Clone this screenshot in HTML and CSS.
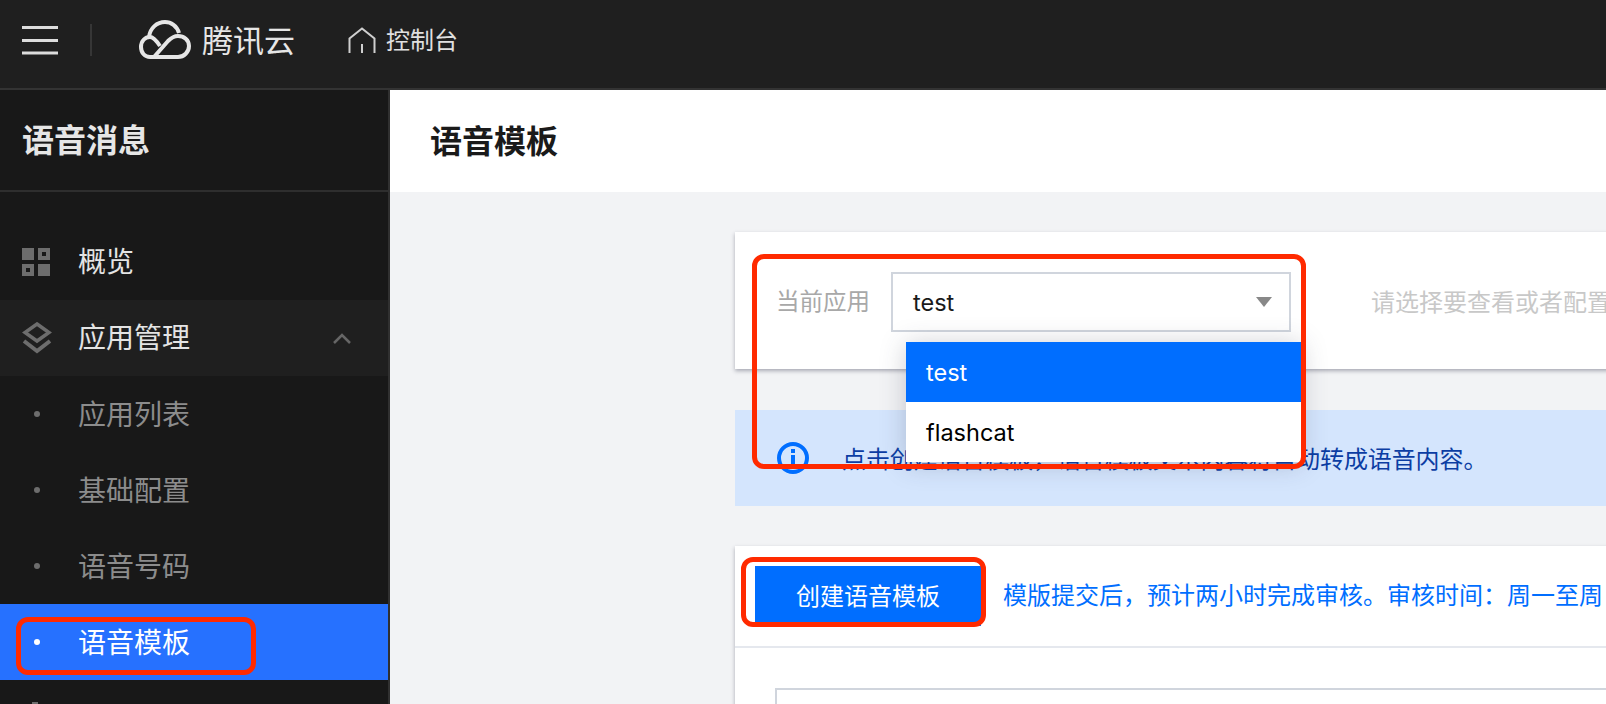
FILE: index.html
```html
<!DOCTYPE html>
<html lang="zh-CN">
<head>
  <meta charset="UTF-8">
  <meta name="viewport" content="width=device-width, initial-scale=1.0">
  <title>语音模板</title>
  <link rel="stylesheet" href="styles.css">
</head>
<body>
  <header class="topbar">
    <svg class="hamburger" width="36" height="30" viewBox="0 0 36 30">
      <path d="M0 2.500H36M0 15.500H36M0 28H36" stroke="#dcdcdc" stroke-width="3" fill="none"></path>
    </svg>
    <span class="topbar-divider"></span>
    <svg class="cloud" width="52" height="40" viewBox="0 0 52 40">
      <path d="M10 17C11 8 18 2 26 2C32 2 38 6 40 13" stroke="#e6e6e6" stroke-width="4" fill="none"></path>
      <path d="M21 26C17 20 14 17 11 17C6 17 2 21 2 27C2 33 6 37 11 37H39C45 37 50 32 50 26C50 20 45 16 39 16C35 16 32 18 29 21L15 37" stroke="#e6e6e6" stroke-width="4" fill="none"></path>
    </svg>
    <span class="brand">腾讯云</span>
    <svg class="home-icon" width="28" height="27" viewBox="0 0 28 27">
      <path d="M1.500 26V11.500L14 1.500L26.500 11.500V26M14 17V26" stroke="#cfcfcf" stroke-width="2" fill="none"></path>
    </svg>
    <span class="console">控制台</span>
  </header>

  <div class="page">
    <aside class="sidebar">
      <div class="sidebar-title">语音消息</div>
      <nav class="menu">
        <a class="menu-item">
          <svg class="menu-icon" width="28" height="28" viewBox="0 0 28 28">
            <path fill-rule="evenodd" d="M0 0H12V12H0ZM16 0H28V12H16ZM20 4V8H24V4ZM0 16H12V28H0ZM4 20V24H8V20ZM16 16H28V28H16Z" fill="#6d6d6d"></path>
          </svg>
          <span class="menu-text">概览</span>
        </a>
        <a class="menu-item open">
          <svg class="menu-icon" width="30" height="32" viewBox="0 0 30 32">
            <path d="M15 2L27 10.500L15 19L3 10.500Z" stroke="#6d6d6d" stroke-width="3.500" fill="none"></path>
            <path d="M2 19L15 29L28 19" stroke="#6d6d6d" stroke-width="4" fill="none"></path>
          </svg>
          <span class="menu-text">应用管理</span>
          <svg class="chevron" width="18" height="11" viewBox="0 0 18 11">
            <path d="M1 10L9 2L17 10" stroke="#666666" stroke-width="2.500" fill="none"></path>
          </svg>
        </a>
        <a class="menu-item sub"><span class="dot"></span><span class="menu-text">应用列表</span></a>
        <a class="menu-item sub"><span class="dot"></span><span class="menu-text">基础配置</span></a>
        <a class="menu-item sub"><span class="dot"></span><span class="menu-text">语音号码</span></a>
        <a class="menu-item sub active"><span class="dot"></span><span class="menu-text">语音模板</span></a>
        <a class="menu-item next"><span class="next-icon"></span></a>
      </nav>
    </aside>

    <main class="main">
      <div class="page-title">语音模板</div>
      <div class="content">
        <section class="card app-card">
          <span class="app-label">当前应用</span>
          <div class="select">
            <span>test</span>
            <span class="select-arrow"></span>
          </div>
          <span class="app-hint">请选择要查看或者配置</span>
        </section>

        <section class="alert">
          <svg class="alert-icon" width="32" height="32" viewBox="0 0 32 32">
            <circle cx="16" cy="16" r="14" stroke="#006eff" stroke-width="4" fill="none"></circle>
            <path d="M14 7H18V11H14ZM14 13H18V24H14Z" fill="#006eff"></path>
          </svg>
          <span class="alert-text">点击创建语音模板，语音模板文本内容将自动转成语音内容。</span>
        </section>

        <section class="card template-card">
          <div class="toolbar">
            <button class="create-btn">创建语音模板</button>
            <span class="toolbar-tip">模版提交后，预计两小时完成审核。审核时间：周一至周</span>
          </div>
          <div class="table-box"></div>
        </section>
      </div>
    </main>

    <!-- 下拉菜单 -->
    <ul class="dropdown">
      <li class="dropdown-item selected">test</li>
      <li class="dropdown-item">flashcat</li>
    </ul>

    <!-- 红框标注 -->
    <div class="mark mark-select"></div>
    <div class="mark mark-menu"></div>
    <div class="mark mark-button"></div>
  </div>
</body>
</html>
```

FILE: styles.css
```css
* {
  box-sizing: border-box;
}

body {
  margin: 0;
  height: 704px;
  overflow: hidden;
  background: #f2f3f5;
  font-family: "Noto Sans CJK SC", "Noto Sans", sans-serif;
  display: flex;
  flex-direction: column;
}

.topbar {
  height: 90px;
  flex: none;
  display: flex;
  align-items: center;
  padding-left: 22px;
  padding-bottom: 8px;
  background: #1f1f1f;
  border-bottom: 2px solid #333333;
}

.hamburger {
  flex: none;
}

.topbar-divider {
  width: 2px;
  height: 32px;
  margin-left: 32px;
  background: #363636;
}

.cloud {
  margin-left: 47px;
  flex: none;
}

.brand {
  margin-left: 11px;
  margin-bottom: 4px;
  font-size: 31px;
  color: #e6e6e6;
}

.home-icon {
  margin-left: 53px;
  flex: none;
}

.console {
  margin-left: 10px;
  margin-bottom: 4px;
  font-size: 24px;
  color: #e0e0e0;
}

.page {
  flex: 1;
  position: relative;
  display: flex;
  min-height: 0;
}

.sidebar {
  width: 390px;
  flex: none;
  background: #181818;
  border-right: 2px solid #303030;
  overflow: hidden;
}

.sidebar-title {
  height: 102px;
  display: flex;
  align-items: center;
  padding-left: 22px;
  padding-bottom: 4px;
  font-size: 32px;
  font-weight: 700;
  color: #e6e6e6;
  border-bottom: 2px solid #2e2e2e;
}

.menu {
  padding-top: 32px;
}

.menu-item {
  height: 76px;
  display: flex;
  align-items: center;
  font-size: 28px;
  color: #e4e4e4;
}

.menu-text {
  margin-bottom: 4px;
}

.menu-icon {
  flex: none;
  margin-left: 22px;
  margin-right: 28px;
}

.menu-item.open {
  background: #1f1f1f;
}

.menu-item.open .menu-icon {
  margin-right: 26px;
}

.chevron {
  margin-left: auto;
  margin-right: 37px;
}

.menu-item.sub {
  color: #8c8c8c;
}

.menu-item.sub .menu-text {
  margin-bottom: 2px;
}

.dot {
  width: 6px;
  height: 6px;
  margin-left: 34px;
  margin-right: 38px;
  border-radius: 50%;
  background: #6d6d6d;
}

.menu-item.active {
  background: #2671ff;
  color: #ffffff;
}

.menu-item.active .dot {
  background: #ffffff;
}

.menu-item.next {
  align-items: flex-start;
  padding-top: 22px;
}

.next-icon {
  width: 6px;
  height: 20px;
  margin-left: 32px;
  background: #6d6d6d;
}

.main {
  flex: 1;
  min-width: 0;
  overflow: hidden;
}

.page-title {
  height: 102px;
  display: flex;
  align-items: center;
  padding-left: 40px;
  padding-bottom: 4px;
  background: #ffffff;
  font-size: 32px;
  font-weight: 700;
  color: #1a1a1a;
}

.content {
  width: 1000px;
  margin-left: 345px;
  padding-top: 40px;
}

.card {
  background: #ffffff;
  box-shadow: 0 2px 4px rgba(54, 58, 80, 0.4);
}

.app-card {
  height: 137px;
  display: flex;
  align-items: flex-start;
  padding: 40px 0 0 41px;
  white-space: nowrap;
}

.app-label {
  width: 115px;
  line-height: 56px;
  font-size: 23.500px;
  color: #a8a8a8;
}

.select {
  width: 400px;
  height: 60px;
  flex: none;
  display: flex;
  align-items: center;
  justify-content: space-between;
  padding: 0 17px 0 20px;
  border: 2px solid #d0d5dd;
  font-family: Inter, "Noto Sans", sans-serif;
  font-size: 23.500px;
  color: #1a1a1a;
}

.select-arrow {
  width: 0;
  height: 0;
  border-left: 8px solid transparent;
  border-right: 8px solid transparent;
  border-top: 10px solid #888888;
}

.app-hint {
  margin-left: 80px;
  line-height: 58px;
  font-size: 24px;
  color: #c8c8c8;
}

.alert {
  height: 96px;
  margin-top: 41px;
  display: flex;
  align-items: center;
  padding: 0 0 0 42px;
  background: #d4e5fd;
  font-size: 24px;
  color: #0b3da3;
  white-space: nowrap;
}

.alert-icon {
  flex: none;
  margin-right: 33px;
}

.alert-text {
  margin-bottom: 2px;
  letter-spacing: -0.100px;
}

.template-card {
  height: 200px;
  margin-top: 40px;
}

.toolbar {
  height: 102px;
  display: flex;
  align-items: center;
  padding: 0 0 0 20px;
  border-bottom: 2px solid #e5e8ee;
  white-space: nowrap;
}

.create-btn {
  width: 226px;
  height: 60px;
  flex: none;
  border: 0;
  padding: 0 0 3px;
  background: #006eff;
  color: #ffffff;
  font-family: inherit;
  font-size: 24px;
}

.toolbar-tip {
  margin-left: 22px;
  margin-bottom: 6px;
  font-size: 24px;
  color: #006eff;
}

.table-box {
  height: 60px;
  margin: 40px 0 0 40px;
  border: 2px solid #d0d5dd;
}

.dropdown {
  position: absolute;
  left: 906px;
  top: 252px;
  width: 395px;
  margin: 0;
  padding: 0;
  list-style: none;
  background: #ffffff;
  box-shadow: 0 2px 24px rgba(54, 58, 80, 0.25);
  font-family: Inter, "Noto Sans", sans-serif;
  font-size: 23.500px;
  color: #000000;
}

.dropdown-item {
  height: 60px;
  line-height: 61px;
  padding-left: 20px;
}

.dropdown-item.selected {
  background: #006eff;
  color: #ffffff;
}

.mark {
  position: absolute;
  border: 5px solid #ff2a00;
  border-radius: 12px;
}

.mark-select {
  left: 752px;
  top: 164px;
  width: 554px;
  height: 215px;
}

.mark-menu {
  left: 16px;
  top: 527px;
  width: 240px;
  height: 58px;
}

.mark-button {
  left: 741px;
  top: 467px;
  width: 245px;
  height: 70px;
}
```
